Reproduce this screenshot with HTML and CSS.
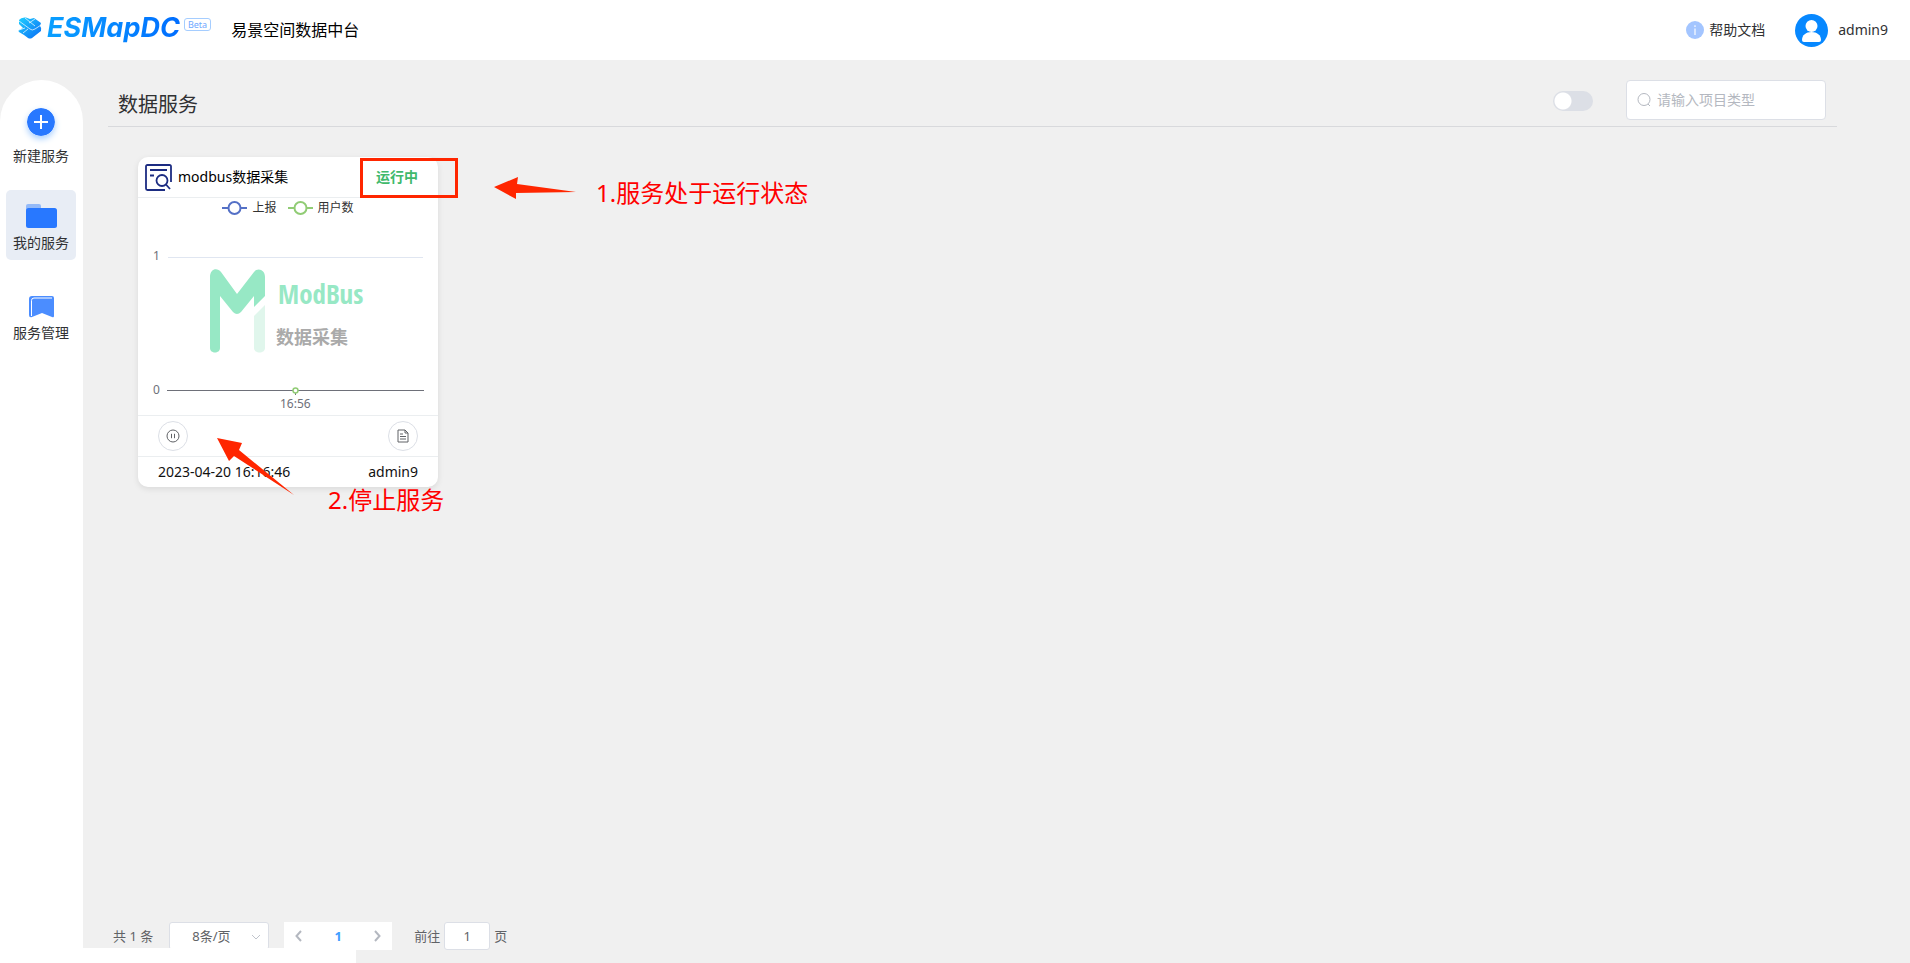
FILE: index.html
```
<!DOCTYPE html>
<html lang="zh-CN">
<head>
<meta charset="utf-8">
<title>ESMapDC 易景空间数据中台</title>
<link rel="stylesheet" href="styles.css">
</head>
<body>
<header class="topbar">
  <a class="brand" href="#" aria-label="ESMapDC Beta">
    <svg class="brand-mark" viewBox="0 0 24 22" aria-hidden="true">
      <defs>
        <linearGradient id="mark" x1="0" y1="0" x2="1" y2="1"><stop offset="0" stop-color="#1fd0ff"/><stop offset="1" stop-color="#0a6cf5"/></linearGradient>
      </defs>
      <path fill="url(#mark)" d="M1 3Q3 0 8 .5L12 2L16 1L23 6L22 9Q24 11 23 14L14 21Q12 22 10 21L6 18L1 15Q0 14 1 13L5 11L1 7Z"/>
      <path fill="none" stroke="#fff" stroke-width=".7" d="M1 4L12 12Q14 14 17 12L23 8M7 1L17 9M17 2L11 6M1 13L7 11M5 16L10 12"/>
    </svg>
    <span class="brand-name">ESMapDC</span>
    <span class="beta">Beta</span>
  </a>
  <span class="product">易景空间数据中台</span>
  <a class="help" href="#">
    <svg class="help-icon" viewBox="0 0 18 18" aria-hidden="true"><circle cx="9" cy="9" r="9" fill="#a3c5ff"/><path d="M9 7.500V14M9 4.300V6" stroke="#e4eeff" stroke-width="1.600"/></svg>
    帮助文档
  </a>
  <a class="user" href="#">
    <svg class="avatar" viewBox="0 0 33 33" aria-hidden="true"><circle cx="16.500" cy="16.500" r="16.500" fill="#0788ff"/><circle cx="16.500" cy="12" r="6" fill="#fff"/><path fill="#fff" d="M7 26C7 21 11 18 16.500 18S26 21 26 26Q26 28 24 28H9Q7 28 7 26Z"/></svg>
    admin9
  </a>
</header>
<div class="layout">
  <nav class="sidebar">
    <a class="nav-item create" href="#">
      <svg class="plus" viewBox="0 0 28 28" aria-hidden="true"><circle cx="14" cy="14" r="14" fill="#2878ff"/><path d="M14 7V21M7 14H21" stroke="#fff" stroke-width="2"/></svg>
      新建服务
    </a>
    <a class="nav-item active" href="#">
      <svg class="folder" viewBox="0 0 31 24" aria-hidden="true"><path fill="#94baf8" d="M0 6V2Q0 0 2 0H13Q15 0 15 2V6Z"/><rect y="4" width="31" height="20" rx="2.500" fill="#2878ff"/></svg>
      我的服务
    </a>
    <a class="nav-item" href="#">
      <svg class="manage" viewBox="0 0 25 22" aria-hidden="true"><path fill="#4b8dff" d="M3 0H23Q25 0 25 2V20Q25 22 23 21L13 17L3 21Q0 22 0 19V3Q0 0 3 0Z"/><path fill="none" stroke="#fff" stroke-width="1" d="M2.500 20V4.500Q2.500 2 5 2H23"/></svg>
      服务管理
    </a>
  </nav>
  <main class="content">
    <div class="page-head">
      <h1 class="title">数据服务</h1>
      <input class="switch" type="checkbox" role="switch" aria-label="切换显示">
      <label class="search">
        <svg class="search-icon" viewBox="0 0 14 14" fill="none" stroke="#b4b8c0" aria-hidden="true"><circle cx="7" cy="6.500" r="6"/><path d="M11 11L13 13"/></svg>
        <input class="search-input" type="text" placeholder="请输入项目类型" aria-label="项目类型">
      </label>
    </div>
    <section class="stage">
      <article class="card">
        <header class="card-head">
          <svg class="card-icon" viewBox="0 0 27 27" fill="none" stroke="#1c2c82" stroke-width="1.800" aria-hidden="true"><path d="M26 18V2.500Q26 1 24.500 1H2.500Q1 1 1 2.500V24.500Q1 26 2.500 26H20M5 6H22M5 11.500H9"/><circle cx="17" cy="16.500" r="5.500"/><path d="M21 20.500L25 25"/></svg>
          <h2 class="card-title">modbus数据采集</h2>
          <span class="status">运行中</span>
        </header>
        <div class="legend">
          <span class="legend-item"><svg class="legend-mark" viewBox="0 0 25 14" fill="#fff" stroke="#5470c6" stroke-width="2" aria-hidden="true"><path d="M0 7H25"/><circle cx="12.500" cy="7" r="6"/></svg>上报</span>
          <span class="legend-item"><svg class="legend-mark" viewBox="0 0 25 14" fill="#fff" stroke="#91cc75" stroke-width="2" aria-hidden="true"><path d="M0 7H25"/><circle cx="12.500" cy="7" r="6"/></svg>用户数</span>
        </div>
        <svg class="chart" viewBox="0 0 300 197" role="img" aria-label="上报与用户数">
          <path d="M30 39.500H285" stroke="#e0e6f1"/>
          <g class="axis"><text x="15" y="42">1</text><text x="15" y="176">0</text><text x="142" y="190">16:56</text></g>
          <path fill="#97e8c5" d="M72 130V59C72 51 79 49 83 54L99 76L116 54C120 49 127 52 127 59V78L116 89V78L103 94Q99 98 95 94L82 78V130C82 136 72 136 72 130Z"/>
          <path fill="#e0f6ec" d="M116 130V98L127 87V130C127 136 116 136 116 130Z"/>
          <text class="mod" x="140" y="86">ModBus</text>
          <text class="mod-sub" x="138" y="126">数据采集</text>
          <path d="M29 172.500H286M157.500 172V177" stroke="#6e7079"/>
          <circle cx="157.500" cy="172.500" r="2.500" fill="#fff" stroke="#91cc75" stroke-width="1.500"/>
        </svg>
        <div class="actions">
          <button class="round" type="button" aria-label="停止服务"><svg class="round-icon" viewBox="0 0 14 14" fill="none" stroke="#606266" aria-hidden="true"><circle cx="7" cy="7" r="6"/><path d="M5.500 4.800V9.200M8.500 4.800V9.200"/></svg></button>
          <button class="round" type="button" aria-label="查看日志"><svg class="round-icon" viewBox="0 0 14 14" fill="none" stroke="#606266" aria-hidden="true"><path d="M2 1H9L12 4V13H2ZM9 1V4H12M4 5H7M4 7.500H10M4 10H10"/></svg></button>
        </div>
        <footer class="card-foot"><time>2023-04-20 16:16:46</time><span>admin9</span></footer>
      </article>
      <div class="mark-box"></div>
      <svg class="arrow-one" viewBox="0 0 82 22" aria-hidden="true"><path fill="#ff2600" d="M0 10L24 0L23 7L82 15L22 16V22Z"/></svg>
      <p class="note note-one">1.服务处于运行状态</p>
      <svg class="arrow-two" viewBox="0 0 77 57" aria-hidden="true"><path fill="#ff2600" d="M0 0L25 5L22 12L77 57L17 18L12 23Z"/></svg>
      <p class="note note-two">2.停止服务</p>
    </section>
    <div class="pagination">
      <span>共 1 条</span>
      <span class="size-wrap">
        <select class="page-size" aria-label="每页条数"><option>8条/页</option></select>
        <svg class="size-arrow" viewBox="0 0 10 6" aria-hidden="true"><path d="M1 1L5 5L9 1"/></svg>
      </span>
      <div class="pager">
        <button class="page-btn" type="button" aria-label="上一页"><svg class="chev" viewBox="0 0 8 12" aria-hidden="true"><path d="M6 1L1.500 6L6 11"/></svg></button>
        <button class="page-btn current" type="button">1</button>
        <button class="page-btn" type="button" aria-label="下一页"><svg class="chev" viewBox="0 0 8 12" aria-hidden="true"><path d="M2 1L6.500 6L2 11"/></svg></button>
      </div>
      <label class="jump">前往 <input class="jump-input" type="text" value="1"> 页</label>
    </div>
  </main>
</div>
<div class="bottom-strip"></div>
</body>
</html>
```
FILE: styles.css
```
* { box-sizing: border-box; }
body {
  margin: 0;
  min-height: 100vh;
  display: flex;
  flex-direction: column;
  position: relative;
  background: #f0f0f0;
  color: #303133;
  font: 14px/20px "Noto Sans", "Noto Sans CJK SC", sans-serif;
}
a { color: inherit; text-decoration: none; }
h1, h2, p { margin: 0; font-weight: 400; }
button, input, select { font: inherit; color: inherit; }
svg { display: block; flex: none; }

.topbar {
  display: flex;
  align-items: center;
  height: 60px;
  padding: 0 22px 0 18px;
  background: #fff;
}
.brand { display: flex; align-items: center; height: 38px; padding-bottom: 4px; }
.brand-mark { width: 24px; height: 22px; }
.brand-name {
  margin-left: 5px;
  padding-right: 4px;
  font: italic 700 27px/34px Inter, sans-serif;
  background: linear-gradient(90deg, #0aa0ff, #006cff);
  background-clip: text;
  color: transparent;
}
.beta {
  align-self: flex-start;
  margin-top: 7px;
  padding: 0 3px;
  border: 1px solid #a5cdff;
  border-radius: 3px;
  font-size: 9px;
  line-height: 11px;
  color: #6fa9ff;
}
.product { margin-left: 20px; font-size: 16px; color: #000; }
.help { display: flex; align-items: center; gap: 5px; margin-left: auto; }
.help-icon { width: 18px; height: 18px; }
.user { display: flex; align-items: center; gap: 10px; margin-left: 30px; }
.avatar { width: 33px; height: 33px; }

.layout { flex: 1; display: flex; padding-top: 20px; }
.sidebar {
  width: 83px;
  padding: 20px 6px 0;
  background: #fff;
  border-radius: 42px 42px 0 0;
}
.nav-item {
  width: 70px;
  height: 70px;
  margin-bottom: 20px;
  display: flex;
  flex-direction: column;
  align-items: center;
  justify-content: flex-end;
  gap: 5px;
  padding-bottom: 7px;
  border-radius: 5px;
}
.create { gap: 10px; padding-bottom: 4px; }
.active { background: #e8edf5; }
.plus { width: 28px; height: 28px; border-radius: 50%; box-shadow: 0 3px 6px #a9d0ff; }
.folder { width: 31px; height: 24px; }
.manage { width: 25px; height: 22px; }

.content { flex: 1; display: flex; flex-direction: column; padding: 0 73px 12px 25px; }
.page-head {
  display: flex;
  align-items: flex-start;
  height: 47px;
  padding: 0 11px 0 10px;
  border-bottom: 1px solid #d8d9dc;
}
.title { margin-right: auto; font-size: 20px; line-height: 50px; }
.switch {
  appearance: none;
  width: 40px;
  height: 20px;
  margin: 11px 33px 0 0;
  border-radius: 10px;
  background: radial-gradient(circle at 10px 10px, #fff 8px, transparent 9px) #dcdfe6;
}
.search {
  display: flex;
  align-items: center;
  gap: 6px;
  width: 200px;
  height: 40px;
  padding: 0 10px;
  border: 1px solid #dcdfe6;
  border-radius: 4px;
  background: #fff;
}
.search-icon { width: 14px; height: 14px; }
.search-input { min-width: 0; flex: 1; padding: 0; border: 0; outline: 0; background: none; }
.search-input::placeholder { color: #b4b8c0; }

.stage { flex: 1; position: relative; padding: 30px; }
.card {
  width: 300px;
  border-radius: 10px;
  background: #fff;
  box-shadow: 0 2px 6px #00000018;
}
.card-head {
  display: flex;
  align-items: center;
  height: 41px;
  padding: 0 20px 0 7px;
  border-bottom: 1px solid #ebeef0;
}
.card-icon { width: 27px; height: 27px; }
.card-title { margin-left: 6px; font-size: 14px; color: #000; }
.status { margin-left: auto; font-weight: 700; color: #40b96b; }
.legend { display: flex; justify-content: center; gap: 11px; height: 20px; font-size: 12px; color: #333; }
.legend-item { display: flex; align-items: center; gap: 5px; }
.legend-mark { width: 25px; height: 14px; }
.chart { width: 100%; }
.axis { font-size: 12px; fill: #6e7079; }
.mod { font: 700 27px "Liberation Sans Narrow", "Open Sans Condensed", "DejaVu Sans Condensed", sans-serif; fill: #97e8c5; }
.mod-sub { font-size: 18px; font-weight: 700; fill: #aaa; }
.actions {
  display: flex;
  justify-content: space-between;
  height: 42px;
  padding: 5px 20px;
  border: solid #ebeef0;
  border-width: 1px 0;
}
.round {
  display: grid;
  place-items: center;
  width: 30px;
  height: 30px;
  padding: 0;
  border: 1px solid #dcdfe6;
  border-radius: 50%;
  background: #fff;
}
.round-icon { width: 14px; height: 14px; }
.card-foot { display: flex; justify-content: space-between; padding: 5px 20px; color: #111; }

.mark-box { position: absolute; left: 252px; top: 31px; width: 98px; height: 40px; border: 3px solid #ff2600; }
.note { position: absolute; font-size: 24px; line-height: 32px; color: #f00; white-space: nowrap; }
.note-one { left: 488px; top: 50px; }
.note-two { left: 220px; top: 357px; }
.arrow-one { position: absolute; left: 386px; top: 50px; width: 82px; }
.arrow-two { position: absolute; left: 109px; top: 311px; width: 77px; }

.pagination {
  display: flex;
  align-items: center;
  height: 30px;
  padding-left: 5px;
  font-size: 13px;
  color: #606266;
}
.size-wrap { position: relative; margin: 0 15px 0 16px; }
.page-size {
  display: block;
  appearance: none;
  width: 100px;
  height: 28px;
  padding: 0 22px;
  border: 1px solid #dcdfe6;
  border-radius: 3px;
  background: #fff;
}
.size-arrow { position: absolute; right: 8px; top: 12px; width: 10px; fill: none; stroke: #c0c4cc; pointer-events: none; }
.pager { display: flex; background: #fff; }
.page-btn { display: grid; place-items: center; width: 36px; height: 28px; padding: 0; border: 0; background: none; }
.page-btn:first-child { padding-right: 6px; }
.page-btn:last-child { padding-left: 6px; }
.current { font-weight: 700; color: #409eff; }
.chev { width: 8px; height: 12px; fill: none; stroke: #b4b8c0; stroke-width: 2; }
.jump { display: flex; align-items: center; gap: 4px; margin-left: 22px; }
.jump-input { width: 46px; height: 28px; padding: 0; border: 1px solid #dcdfe6; border-radius: 3px; text-align: center; background: #fff; }
.bottom-strip { position: absolute; left: 0; bottom: 0; width: 356px; height: 15px; background: #fff; }
```
